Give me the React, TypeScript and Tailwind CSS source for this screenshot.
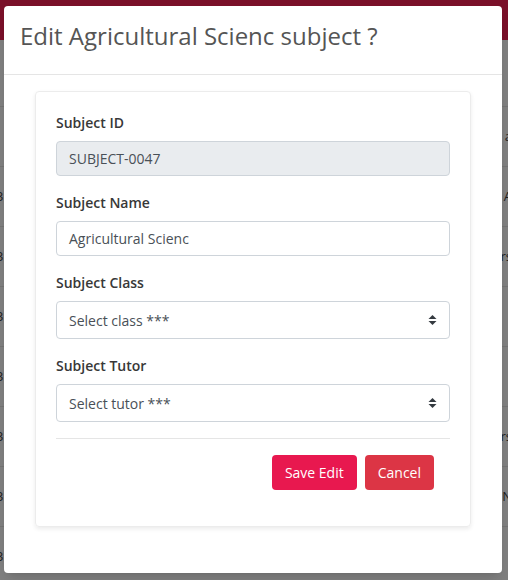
const Arrows = () => (
  <svg width="9" height="12" viewBox="0 0 9 12" className="shrink-0">
    <path d="M4.5 1 L8.5 5 L0.5 5 Z" fill="#343a40" />
    <path d="M4.5 11 L8.5 7 L0.5 7 Z" fill="#343a40" />
  </svg>
);

const Field = ({ label, children }: { label: string; children: React.ReactNode }) => (
  <div className="mb-4">
    <p className="mb-2 text-[14px] leading-[21px] font-semibold text-[#383838]">{label}</p>
    {children}
  </div>
);

const Select = ({ text }: { text: string }) => (
  <div className="flex h-[38px] items-center justify-between rounded border border-[#ced4da] bg-white pl-3 pr-3 text-[14px] text-[#495057]">
    <span>{text}</span>
    <Arrows />
  </div>
);

const rows = [
  { l: "J", r: "a" },
  { l: "3", r: "A" },
  { l: "3", r: "rs" },
  { l: "3", r: "" },
  { l: "3", r: "" },
  { l: "3", r: "rs" },
  { l: "3", r: "N" },
  { l: "3", r: "" },
];

export default function App() {
  return (
    <div
      className="relative h-[580px] w-[508px] overflow-hidden bg-[#808080]"
      style={{ fontFamily: '"Open Sans", "Liberation Sans", sans-serif' }}
    >
      {/* dimmed page behind */}
      <div className="h-10 bg-[#7a1029]" />
      <div className="border-t-[66px] border-transparent">
        {rows.map((row, i) => (
          <div
            key={i}
            className="flex h-[60px] items-center justify-between border-t border-[#747474] text-[13px] text-[#1e1e1e]"
          >
            <span className="-ml-1">{row.l}</span>
            <span className="-mr-1">{row.r}</span>
          </div>
        ))}
      </div>

      {/* modal */}
      <div className="absolute left-[4px] top-[6px] h-[567px] w-[498px] rounded bg-white shadow-lg">
        <div className="h-[69px] border-b border-[#e5e5e5] px-4 pt-3">
          <h2 className="text-[24px] leading-[36px] text-[#555]">Edit Agricultural Scienc subject ?</h2>
        </div>
        <div className="px-[31px] pt-[16px]">
          <div className="rounded border border-[#ececec] px-5 pt-5 pb-9 shadow-[0_2px_4px_rgba(0,0,0,0.08)]">
            <Field label="Subject ID">
              <div className="flex h-[35px] items-center rounded border border-[#ced4da] bg-[#e9ecef] px-3 text-[14px] text-[#495057]">
                SUBJECT-0047
              </div>
            </Field>
            <Field label="Subject Name">
              <div className="flex h-[35px] items-center rounded border border-[#ced4da] bg-white px-3 text-[14px] text-[#495057]">
                Agricultural Scienc
              </div>
            </Field>
            <Field label="Subject Class">
              <Select text="Select class ***" />
            </Field>
            <Field label="Subject Tutor">
              <Select text="Select tutor ***" />
            </Field>
            <hr className="mb-4 border-[#e5e5e5]" />
            <div className="flex justify-end gap-2 pr-4">
              <button className="h-[35px] rounded bg-[#e8184f] px-[13px] text-[14px] text-white">Save Edit</button>
              <button className="h-[35px] rounded bg-[#dc3545] px-[13px] text-[14px] text-white">Cancel</button>
            </div>
          </div>
        </div>
      </div>
    </div>
  );
}
